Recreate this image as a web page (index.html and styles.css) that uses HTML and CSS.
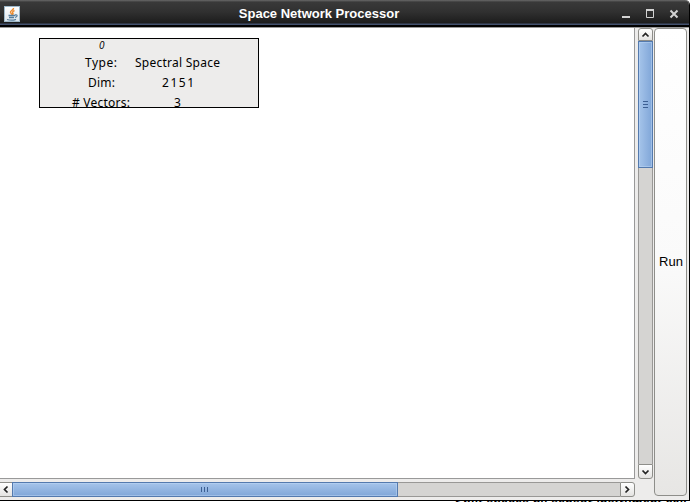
FILE: index.html
```html
<!DOCTYPE html>
<html lang="en"><head><meta charset="utf-8"><title>Space Network Processor</title><link rel="stylesheet" href="styles.css"></head>
<body>
<div class="window">
  <header class="titlebar">
    <svg class="java" viewBox="0 0 16 16" width="16" height="16">
      <defs><linearGradient id="j" x1="0" y1="0" x2="0" y2="1"><stop offset="0" stop-color="#fff"/><stop offset="1" stop-color="#dce5ec"/></linearGradient></defs>
      <rect x=".5" y=".5" width="15" height="15" fill="url(#j)" stroke="#9fb9ca"/>
      <path d="M9.500 2C10 4 6 4.500 6.500 6.500Q7 7.500 8 8.500M10.500 4.500Q7.500 6 9 7.500L8.500 9" fill="none" stroke="#ee8a2c" stroke-width="1.500"/>
      <path d="M4.500 9.500H11M5 11.500H10M3 13.500Q8 15 12 13.300M11 9Q13.500 8.500 13 10Q12.500 11 11 11.500" fill="none" stroke="#557d9c" stroke-width="1.300"/>
    </svg>
    <h1 class="title">Space Network Processor</h1>
    <svg class="controls" viewBox="0 0 58 10" width="58" height="10">
      <path d="M1 8H9" stroke="#d2d2d2" stroke-width="2" fill="none"/>
      <path d="M25.500 1V8.500H32.500V1" fill="none" stroke="#d2d2d2"/><path d="M25 1H33" stroke="#d2d2d2" stroke-width="2"/>
      <path d="M49.500 1.500L56.500 8.500M56.500 1.500L49.500 8.500" fill="none" stroke="#d2d2d2" stroke-width="2"/>
    </svg>
  </header>
  <div class="content">
    <section class="scrollpane">
      <main class="canvas">
        <div class="node">
          <div class="node-id">0</div>
          <svg class="rows" width="218" height="56" viewBox="40 51 218 56">
            <text x="85" y="67" textLength="32">Type:</text><text x="135" y="67" textLength="85">Spectral Space</text>
            <text x="88" y="87" textLength="27">Dim:</text><text x="162" y="87" textLength="32">2151</text>
            <text x="72" y="107" textLength="58">#&#160;Vectors:</text><text x="174" y="107">3</text>
          </svg>
        </div>
      </main>
      <div class="vbar">
        <div class="step up"><svg width="9" height="6" viewBox="0 0 9 6"><path d="M1.500 4.500L4.500 1.500L7.500 4.500"/></svg></div>
        <div class="vthumb"><i></i><i></i><i></i></div>
        <div class="vtrack"></div>
        <div class="step down"><svg width="9" height="6" viewBox="0 0 9 6"><path d="M1.500 1.500L4.500 4.500L7.500 1.500"/></svg></div>
      </div>
      <div class="hbar">
        <div class="step left"><svg width="6" height="9" viewBox="0 0 6 9"><path d="M4.500 1.500L1.500 4.500L4.500 7.500"/></svg></div>
        <div class="hthumb"><i></i><i></i><i></i></div>
        <div class="htrack"></div>
        <div class="step right"><svg width="6" height="9" viewBox="0 0 6 9"><path d="M1.500 1.500L4.500 4.500L1.500 7.500"/></svg></div>
      </div>
    </section>
    <button class="run">Run</button>
  </div>
</div>
<div class="behind">Split spaces by sensor instrument cali</div>
</body></html>
```
FILE: styles.css
```css
* { box-sizing: border-box; }
html, body { margin: 0; width: 690px; height: 502px; overflow: hidden; background: #fff; }
body { font-family: "Liberation Sans", Arial, sans-serif; }
.window { height: 501px; background: #edeceb; border-right: 1px solid #000; border-bottom: 1px solid #000; border-top-right-radius: 5px; overflow: hidden; }
.titlebar { height: 27px; padding: 0 10px 0 4px; display: flex; align-items: center; background: linear-gradient(#666 0, #555 1px, #393939 2px, #303030 12px, #1c1c1c 23px, #42506d 24px, #42506d 25px, #000 25px); }
.java { flex: none; }
.title { flex: 1; margin: 0; padding-right: 3px; text-align: center; color: #fff; font-size: 13px; line-height: 26px; }
.controls { flex: none; margin-top: 1px; }
.content { display: flex; height: 473px; border-top: 1px solid #999; }
.scrollpane { width: 653px; flex: none; display: grid; grid-template: 451px 15px / 635px 15px; gap: 3px; }
.canvas { background: #fff; border-right: 1px solid #999; border-bottom: 1px solid #999; padding: 10px 0 0 39px; }
.node { width: 220px; height: 70px; border: 1px solid #000; background: #edeceb; overflow: hidden; }
.node-id { height: 12px; padding-left: 59px; font: italic 10px/13px "Open Sans", sans-serif; color: #000; }
.rows { display: block; font: 12px "Noto Sans", sans-serif; fill: #000; }
.vbar, .hbar { display: flex; }
.vbar { flex-direction: column; }
.step { flex: none; display: flex; align-items: center; justify-content: center; border: 1px solid #8e8e8a; background: linear-gradient(#fff, #e4e3e1); }
.step path { fill: none; stroke: #222; stroke-width: 1.7; }
.up { height: 13px; border-radius: 3px 3px 0 0; }
.down { height: 15px; border-radius: 0 0 3px 3px; }
.left { width: 13px; border-left: 0; }
.right { width: 15px; border-radius: 0 3px 3px 0; padding-right: 1px; }
.vthumb, .hthumb { display: flex; align-items: center; justify-content: center; gap: 2px; border: 1px solid #547aae; box-shadow: inset 0 0 0 1px rgba(190, 215, 245, .5); }
.vthumb { flex: none; height: 127px; flex-direction: column; background: linear-gradient(90deg, #a5c4ea, #80a6d8); }
.hthumb { width: 386px; padding-right: 2px; background: linear-gradient(#a5c4ea, #80a6d8); margin-left: -1px; }
.vthumb i { width: 5px; height: 1px; background: #3c5f92; }
.hthumb i { width: 1px; height: 5px; background: #3c5f92; }
.vtrack { flex: 1; background: #d5d4d2; border: 1px solid #999896; border-width: 0 1px; }
.htrack { flex: 1; background: #d5d4d2; border: 1px solid #999896; border-width: 1px 0; }
.run { width: 33px; height: 468px; margin: 0 0 0 1px; padding: 0 0 2px 1px; flex: none; border: 1px solid #8e8e8a; border-radius: 4px; background: linear-gradient(#fff, #fafafa 50%, #e7e6e4); font: 13px "Liberation Sans", sans-serif; color: #000; }
.behind { height: 1px; padding-left: 455px; overflow: hidden; white-space: nowrap; font: bold 12px/4px "Liberation Sans", sans-serif; letter-spacing: .35px; }
```
